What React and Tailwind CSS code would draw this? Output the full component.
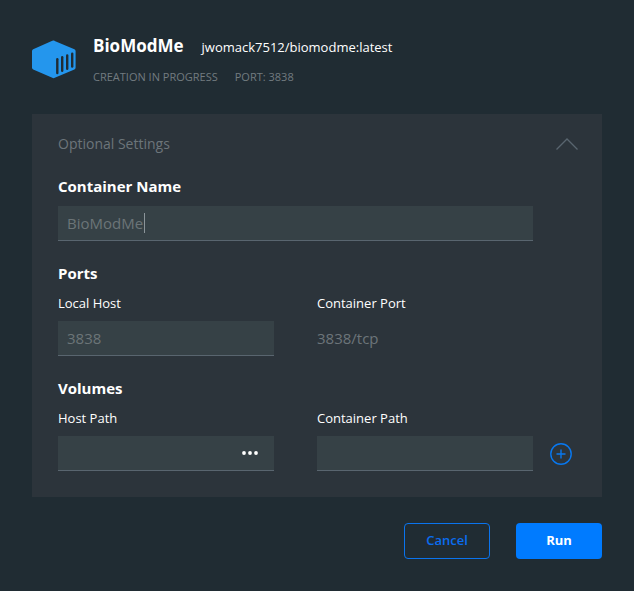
import { useId, useState } from "react";

function ContainerLogo() {
  return (
    <svg viewBox="0 0 44 39" className="h-[39px] w-11 shrink-0" aria-hidden="true">
      <path d="M21.5 0.6 42.4 9.2Q43.6 9.8 43.6 11V27.6Q43.6 29 42.4 29.5L22.8 37.8Q21.5 38.5 20.3 37.8L1.2 29.5Q0 29 0 27.6V11Q0 9.8 1.2 9.2L20.3 0.8Q21.5 0.2 22.8 0.8Z" fill="#2496ed" />
      <g stroke="#202c33" strokeWidth="2.4" strokeLinecap="round">
        <path d="M25.3 19.3V33" />
        <path d="M30.2 17.3V30.8" />
        <path d="M35.2 15.5V28.8" />
        <path d="M40.2 13.8V26.5" />
      </g>
    </svg>
  );
}

function TextField({ label, labelClass, placeholder, caret, children }) {
  const id = useId();
  const [value, setValue] = useState("");
  return (
    <div className="min-w-0">
      <label htmlFor={id} className={`block leading-5 ${labelClass}`}>
        {label}
      </label>
      <div className="relative flex h-[35px] items-center border-b border-[#59656f] bg-[#364146]">
        <input
          id={id}
          type="text"
          value={value}
          placeholder={placeholder}
          onChange={(e) => setValue(e.target.value)}
          className="h-full w-full min-w-0 bg-transparent px-[9px] text-[15px] text-white placeholder-[#6c7578] outline-none"
        />
        {caret && value === "" && (
          <span className="pointer-events-none absolute top-[7px] left-[86px] h-5 w-px bg-[#8b9499]" />
        )}
        {children}
      </div>
    </div>
  );
}

const fieldLabel = "mb-2 text-[13px] text-white";
const heading = "mb-[10px] text-[15px] font-bold text-white";

export default function App() {
  const [open, setOpen] = useState(true);
  return (
    <main className="min-h-screen bg-[#202c33] px-8 py-8 font-['Open_Sans',sans-serif] text-white">
      <header className="flex items-start gap-[17px]">
        <div className="pt-2">
          <ContainerLogo />
        </div>
        <div className="min-w-0">
          <div className="flex items-baseline gap-[18px]">
            <h1 className="text-[17px] leading-7 font-bold">BioModMe</h1>
            <span className="text-[13px]">jwomack7512/biomodme:latest</span>
          </div>
          <div className="mt-[7px] flex gap-[17px] text-[11px] leading-5 font-medium text-[#727b80]">
            <span>CREATION IN PROGRESS</span>
            <span>PORT: 3838</span>
          </div>
        </div>
      </header>

      <section className="mt-[27px] bg-[#2c343b] px-[26px] pt-5 pb-[26px]">
        <button
          type="button"
          aria-expanded={open}
          onClick={() => setOpen(!open)}
          className="flex w-full items-center justify-between text-[14px] leading-5 text-[#6c757a]"
        >
          <span>Optional Settings</span>
          <svg viewBox="0 0 22 12" className="mr-[-2px] h-3 w-[22px]" fill="none" stroke="#59656f" strokeWidth="1.3" aria-hidden="true">
            <path d="M0.5 11.5 11 1 21.5 11.5" />
          </svg>
        </button>

        {open && (
          <div className="mt-[22px] grid grid-cols-[minmax(0,1fr)_22px] gap-x-[17px] pr-1">
            <div className="flex flex-col gap-[22px]">
              <TextField label="Container Name" labelClass={heading} placeholder="BioModMe" caret />

              <div>
                <h2 className={`leading-5 ${heading}`}>Ports</h2>
                <div className="grid grid-cols-2 gap-[43px]">
                  <TextField label="Local Host" labelClass={fieldLabel} placeholder="3838" />
                  <div>
                    <div className={`leading-5 ${fieldLabel}`}>Container Port</div>
                    <div className="flex h-[35px] items-center text-[15px] text-[#6c757a]">3838/tcp</div>
                  </div>
                </div>
              </div>

              <div>
                <h2 className={`leading-5 ${heading}`}>Volumes</h2>
                <div className="grid grid-cols-2 gap-[43px]">
                  <TextField label="Host Path" labelClass={fieldLabel}>
                    <button type="button" aria-label="Browse" className="mr-4 shrink-0">
                      <svg viewBox="0 0 16 4" className="h-1 w-4" fill="#ffffff" aria-hidden="true">
                        <circle cx="2" cy="2" r="1.9" />
                        <circle cx="8" cy="2" r="1.9" />
                        <circle cx="14" cy="2" r="1.9" />
                      </svg>
                    </button>
                  </TextField>
                  <TextField label="Container Path" labelClass={fieldLabel} />
                </div>
              </div>
            </div>
            <button type="button" aria-label="Add volume" className="flex h-[35px] items-center self-end">
              <svg viewBox="0 0 22 22" className="size-[22px]" fill="none" stroke="#0878f0" strokeWidth="1.4" aria-hidden="true">
                <circle cx="11" cy="11" r="10.2" />
                <path d="M11 6.5V15.5M6.5 11H15.5" />
              </svg>
            </button>
          </div>
        )}
      </section>

      <footer className="mt-[26px] flex justify-end gap-[26px] text-[13px]">
        <button type="button" className="h-9 w-[86px] rounded border border-[#0a74ee] font-semibold text-[#0a6cf0]">
          Cancel
        </button>
        <button type="button" className="h-9 w-[86px] rounded bg-[#007bff] font-bold text-white">
          Run
        </button>
      </footer>
    </main>
  );
}
